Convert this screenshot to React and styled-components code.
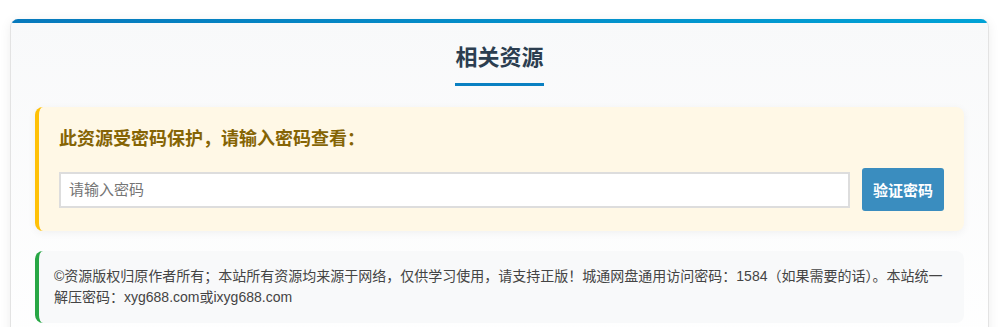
import React from "react";
import styled, { createGlobalStyle } from "styled-components";

const Global = createGlobalStyle`
  html, body {
    margin: 0;
    padding: 0;
    background: #ffffff;
  }
  body {
    font-family: "Liberation Sans", "Noto Sans CJK SC", sans-serif;
    color: #333;
  }
  * { box-sizing: border-box; }
`;

const Page = styled.div`
  padding: 19px 15px 0 10px;
`;

const Card = styled.section`
  position: relative;
  border: 1px solid #e3e3e3;
  border-top: none;
  border-radius: 8px;
  background: linear-gradient(180deg, #f8f9fa 0%, #ffffff 100%);
  box-shadow: 0 2px 12px rgba(0, 0, 0, 0.07);
  padding: 24px 24px 30px;
  overflow: hidden;

  &::before {
    content: "";
    position: absolute;
    left: 0;
    right: 0;
    top: 0;
    height: 4px;
    background: linear-gradient(90deg, #0779bc 0%, #00a2d6 100%);
  }
`;

const TitleWrap = styled.div`
  text-align: center;
  margin-bottom: 21px;
`;

const Title = styled.h2`
  display: inline-block;
  margin: 0;
  font-size: 22px;
  line-height: 29px;
  font-weight: 700;
  color: #2c3e50;
  padding-bottom: 11px;
  border-bottom: 3px solid #0a80c2;
`;

const Notice = styled.div`
  border-radius: 8px;
  border-left: 4px solid ${(p) => p.$accent};
  background: ${(p) => p.$bg};
  box-shadow: ${(p) => (p.$shadow ? "0 2px 8px rgba(0, 0, 0, 0.05)" : "none")};
  padding: ${(p) => p.$pad};
  margin-bottom: 20px;
`;

const NoticeTitle = styled.h3`
  margin: 0 0 16px;
  font-size: 18px;
  line-height: 25px;
  font-weight: 700;
  color: #856404;
`;

const FormRow = styled.form`
  display: flex;
  align-items: center;
  gap: 12px;
`;

const PasswordInput = styled.input`
  flex: 1;
  height: 36px;
  border: 2px solid #dddddd;
  border-radius: 0;
  background: #ffffff;
  padding: 0 8px;
  font-size: 15px;
  font-family: "Liberation Sans", "Noto Sans CJK SC", sans-serif;
  color: #333;
  outline: none;

  &::placeholder {
    color: #757575;
  }
`;

const VerifyButton = styled.button`
  height: 43px;
  padding: 0 11px;
  border: none;
  border-radius: 3px;
  background: #3a8dbf;
  color: #ffffff;
  font-size: 15px;
  font-weight: 700;
  font-family: "Liberation Sans", "Noto Sans CJK SC", sans-serif;
  cursor: pointer;
`;

const Copyright = styled.p`
  margin: 0;
  font-size: 14px;
  line-height: 21px;
  color: #444;
`;

export default function App() {
  return (
    <>
      <Global />
      <Page>
        <Card>
          <TitleWrap>
            <Title>相关资源</Title>
          </TitleWrap>
          <Notice $accent="#ffc107" $bg="#fff8e6" $shadow $pad="20px 20px 20px 20px">
            <NoticeTitle>此资源受密码保护，请输入密码查看：</NoticeTitle>
            <FormRow onSubmit={(e) => e.preventDefault()}>
              <PasswordInput type="password" placeholder="请输入密码" />
              <VerifyButton type="submit">验证密码</VerifyButton>
            </FormRow>
          </Notice>
          <Notice $accent="#28a745" $bg="#f8f9fa" $pad="15px 12px 15px 15px">
            <Copyright>
              ©资源版权归原作者所有；本站所有资源均来源于网络，仅供学习使用，请支持正版！城通网盘通用访问密码：1584（如果需要的话）。本站统一解压密码：xyg688.com或ixyg688.com
            </Copyright>
          </Notice>
        </Card>
      </Page>
    </>
  );
}
